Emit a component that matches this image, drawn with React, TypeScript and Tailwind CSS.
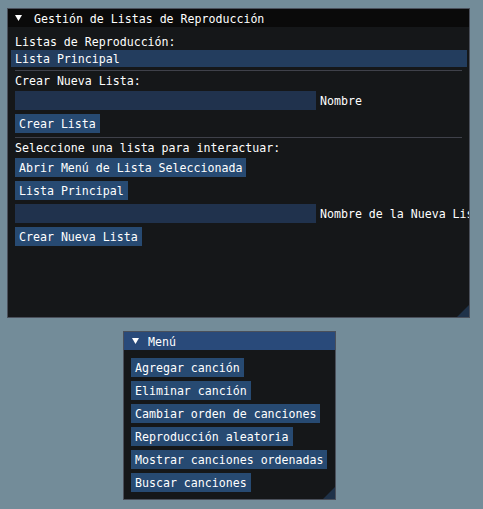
import React from 'react'

/**
 * Ventanas estilo ImGui: gestión de listas + menú
 */
const font = "font-['DejaVu_Sans_Mono','Liberation_Mono',monospace] text-[11.6px] leading-[15px] text-white"

function Arrow() {
  return (
    <svg width="7" height="6" viewBox="0 0 7 6" className="shrink-0">
      <polygon points="0,0 7,0 3.5,6" fill="#ffffff" />
    </svg>
  )
}

function Grip() {
  return (
    <svg width="12" height="12" viewBox="0 0 12 12" className="absolute right-0 bottom-0">
      <polygon points="12,0 12,12 0,12" fill="#1f3249" />
    </svg>
  )
}

function Button({ label, className = '' }: { label: string; className?: string }) {
  return (
    <div className={`self-start h-[19px] px-[4px] pt-[3px] bg-[#274a72] whitespace-nowrap ${className}`}>
      {label}
    </div>
  )
}

function InputRow({ label, className = '' }: { label: string; className?: string }) {
  return (
    <div className={`flex items-start gap-[4px] h-[19px] whitespace-nowrap ${className}`}>
      <div className="w-[301px] h-[19px] shrink-0 bg-[#20324d]" />
      <span className="pt-[3px]">{label}</span>
    </div>
  )
}

const menuItems = [
  'Agregar canción',
  'Eliminar canción',
  'Cambiar orden de canciones',
  'Reproducción aleatoria',
  'Mostrar canciones ordenadas',
  'Buscar canciones',
]

export default function App() {
  return (
    <div className={`min-h-[509px] w-[483px] bg-[#738c99] pt-[8px] pl-[7px] flex flex-col ${font}`}>
      {/* ventana principal */}
      <div className="relative w-[463px] h-[310px] border border-[#4a505b] bg-[#151719] overflow-hidden flex flex-col">
        <div className="h-[18px] shrink-0 bg-[#0a0a0a] flex items-center pl-[7px]">
          <Arrow />
          <span className="ml-[12px] h-[13px] leading-[14px] whitespace-nowrap">Gestión de Listas de Reproducción</span>
        </div>

        <div className="flex flex-col pl-[7px] pr-[7px] pt-[8px]">
          <div className="h-[13px]">Listas de Reproducción:</div>
          <div className="mt-[2px] -ml-[4px] -mr-[5px] h-[17px] px-[4px] pt-[2px] bg-[#233d5e]">Lista Principal</div>
          <div className="mt-[3px] h-px bg-[#3f414a]" />
          <div className="mt-[3px] h-[13px]">Crear Nueva Lista:</div>
          <InputRow label="Nombre" className="mt-[4px]" />
          <Button label="Crear Lista" className="mt-[4px]" />
          <div className="mt-[4px] h-px bg-[#3f414a]" />
          <div className="mt-[3px] h-[13px]">Seleccione una lista para interactuar:</div>
          <Button label="Abrir Menú de Lista Seleccionada" className="mt-[4px]" />
          <Button label="Lista Principal" className="mt-[4px]" />
          <InputRow label="Nombre de la Nueva Lista" className="mt-[4px]" />
          <Button label="Crear Nueva Lista" className="mt-[4px]" />
        </div>
        <Grip />
      </div>

      {/* ventana de menú */}
      <div className="relative mt-[13px] ml-[116px] w-[213px] h-[169px] border border-[#4a505b] bg-[#151719] overflow-hidden flex flex-col">
        <div className="h-[18px] shrink-0 bg-[#294a7a] flex items-center pl-[8px]">
          <Arrow />
          <span className="ml-[9px] h-[13px] leading-[14px]">Menú</span>
        </div>
        <div className="flex flex-col gap-[4px] pl-[7px] pt-[8px]">
          {menuItems.map(item => (
            <Button key={item} label={item} />
          ))}
        </div>
        <Grip />
      </div>
    </div>
  )
}
